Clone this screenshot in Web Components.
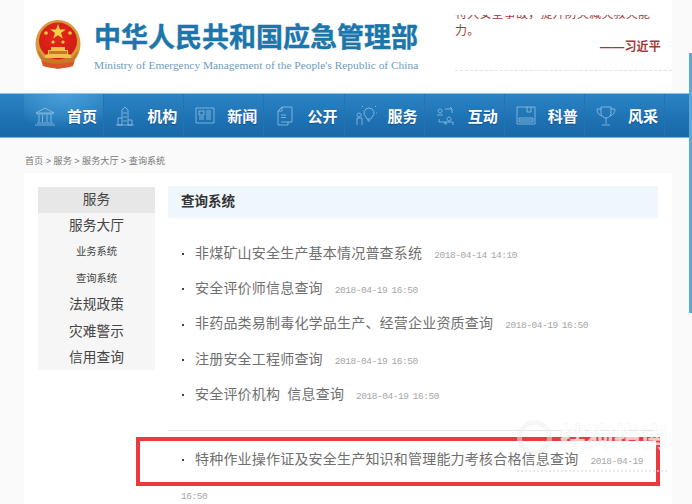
<!DOCTYPE html>
<html><head><meta charset="utf-8"><style>
html,body{margin:0;padding:0;background:#fafafa;height:504px;overflow:hidden}
body{font-family:"Liberation Sans","Noto Sans CJK SC",sans-serif;position:relative}
</style></head><body>
<site-header></site-header>
<site-nav>
<nav-item label="首页" icon="bank" active></nav-item>
<nav-item label="机构" icon="tower"></nav-item>
<nav-item label="新闻" icon="news"></nav-item>
<nav-item label="公开" icon="docs"></nav-item>
<nav-item label="服务" icon="idea"></nav-item>
<nav-item label="互动" icon="talk"></nav-item>
<nav-item label="科普" icon="disk"></nav-item>
<nav-item label="风采" icon="cup"></nav-item>
</site-nav>
<bread-crumb>首页 &gt; 服务 &gt; 服务大厅 &gt; 查询系统</bread-crumb>
<main-panel>
<side-menu slot="side">
<menu-item kind="head">服务</menu-item>
<menu-item>服务大厅</menu-item>
<menu-item kind="sub">业务系统</menu-item>
<menu-item kind="sub">查询系统</menu-item>
<menu-item>法规政策</menu-item>
<menu-item>灾难警示</menu-item>
<menu-item>信用查询</menu-item>
</side-menu>
<result-list slot="main" heading="查询系统">
<result-row date="2018-04-14 14:10">非煤矿山安全生产基本情况普查系统</result-row>
<result-row date="2018-04-19 16:50">安全评价师信息查询</result-row>
<result-row date="2018-04-19 16:50">非药品类易制毒化学品生产、经营企业资质查询</result-row>
<result-row date="2018-04-19 16:50">注册安全工程师查询</result-row>
<result-row date="2018-04-19 16:50">安全评价机构 信息查询</result-row>
<result-row date="2018-04-19 16:50" class="gap">特种作业操作证及安全生产知识和管理能力考核合格信息查询</result-row>
</result-list>
</main-panel>
<call-out></call-out>
<edge-bar></edge-bar>
<script>
const C='"Liberation Sans","Noto Sans CJK SC",sans-serif';
function def(name,html){customElements.define(name,class extends HTMLElement{connectedCallback(){if(this.shadowRoot)return;const r=this.attachShadow({mode:'open'});r.innerHTML=typeof html==='function'?html(this):html;}});}
def('site-header',`<style>
:host{display:flex;width:648px;height:90px;margin-left:24px;background:#fff;box-sizing:border-box;padding:20px 0 0 11px;font-family:${C}}
.e{width:46px;height:50px;flex:none}
.t{margin-left:13px;width:351px;flex:none}
.cn{font-size:27px;line-height:36px;height:36px;font-weight:700;color:#1b76ac;white-space:nowrap;-webkit-text-stroke:.4px #1b76ac}
.en{font:11.400px/14px "Liberation Serif",serif;color:#6d9cc0;white-space:nowrap;margin-top:2px}
.q{flex:none;width:217px;margin-left:10px;margin-top:-5px;height:55px;border-bottom:1px dashed #e2e2e2;overflow:hidden;font-size:12px;color:#a33a3a}
.q div{line-height:17px;letter-spacing:.2px;white-space:nowrap}
.q .a{margin-top:-9px}.q .s{text-align:right;padding-right:11px;font-weight:700;margin-top:-1px}
</style>
<svg class="e" viewBox="0 0 46 50"><defs><radialGradient id="g" cx=".45" cy=".35" r=".8"><stop offset="0" stop-color="#e8261c"/><stop offset="1" stop-color="#c81a12"/></radialGradient></defs>
<ellipse cx="23" cy="24" rx="22.500" ry="24" fill="#d69a3a"/><path d="M3 30c1 10 9 18 20 19 11-1 19-9 20-19l-6 8H9z" fill="#c9772a"/>
<ellipse cx="23" cy="21" rx="19" ry="18.500" fill="url(#g)"/>
<path d="M23 4l1.900 5.600h5.900l-4.800 3.400 1.800 5.600-4.800-3.400-4.800 3.400 1.800-5.600-4.800-3.400h5.900z" fill="#f7d343"/>
<g fill="#f7d343"><circle cx="11" cy="13" r="1.800"/><circle cx="35" cy="13" r="1.800"/><circle cx="18" cy="22" r="1.600"/><circle cx="28" cy="22" r="1.600"/></g>
<path d="M10 38h26v-3l-3-1v-4h-3v-3H16v3h-3v4l-3 1z" fill="#f0c24a"/><path d="M14 31h18v3H14z" fill="#c9772a"/>
<path d="M6 40c6 5 28 5 34 0l-2 6c-8 3-22 3-30 0z" fill="#d8542a"/></svg>
<div class="t"><div class="cn">中华人民共和国应急管理部</div><div class="en">Ministry of Emergency Management of the People's Republic of China</div></div>
<div class="q"><div class="a">特大安全事故，提升防灾减灾救灾能</div><div>力。</div><div class="s">——习近平</div></div>`);
def('site-nav',`<style>
:host{display:flex;height:45px;margin-top:3px;box-sizing:border-box;padding-left:24px;border-top:1px solid #8fc3e6;border-bottom:1px solid #7fb6dc;background:linear-gradient(#2b83c3,#1c6fb0 70%,#1a69a8);font-family:${C};overflow:hidden}
</style><slot></slot>`);
const icons={
bank:'<path d="M11 3 2 8h18zM3 9h16M3 18h16M1 20h20M5 10v7M8.500 10v7M13 10v7M17 10v7"/>',
tower:'<path d="M8 20V5l3-3 3 3v15M10 7v2M12 7v2M10 11v2M12 11v2M10 15v2M12 15v2M8 20H4v-7h4M14 20h4v-5h-4M2 20h18"/>',
news:'<path d="M2 3h18v15H2zM5 6h5v4H5zM12 6h5M12 8h5M12 10h5M5 12h5M5 14h5M12 12h5M12 14h5"/>',
docs:'<path d="M8 2h10v15H7M8 2 4 6v14h10v-3M4 6h4V2M7 10h5M7 12.500h5"/>',
idea:'<path d="M14 3a5 5 0 0 1 3 9l-1 2h-4l-1-2a5 5 0 0 1 3-9zM13 14v2h2M4 8a2 2 0 1 0 .1 0M2 20v-7h5v7M20 2l1-1M8 2 7 1M21 8h1"/>',
talk:'<path d="M5 4a2 2 0 1 0 .1 0M2 10h6M10 4h7l-2-2M17 4v4M4 14v3h7l-2 2M14 12a2 2 0 1 0 .1 0M11 20v-3h7v3"/>',
disk:'<path d="M2 2h18v17H2zM4 13h14v4H4zM12 2v5h4V2M5 15h12"/>',
cup:'<path d="M6 2h10v6a5 5 0 0 1-10 0zM6 4H2c0 4 2 6 5 7M16 4h4c0 4-2 6-5 7M11 13v6M7 20h8"/>'};
def('nav-item',h=>`<style>
:host{display:flex;flex:none;align-items:center;width:80.150px;box-sizing:border-box;height:100%;padding-left:10px;box-shadow:inset -1px 0 0 #2472b0;${h.hasAttribute('active')?'background:radial-gradient(ellipse 60px 36px at 50% 0,#4a9fd8,transparent);':''}}
svg{width:22px;height:22px;fill:none;stroke:#a9d1ee;stroke-width:.75;flex:none;opacity:.9}
span{margin-left:11px;font-size:15px;font-weight:700;color:#fff;white-space:nowrap;text-shadow:0 1px 1px rgba(0,0,60,.3)}
</style><svg viewBox="0 0 22 22">${icons[h.getAttribute('icon')]}</svg><span>${h.getAttribute('label')}</span>`);
def('bread-crumb',`<style>:host{display:block;margin:17px 0 0 25px;height:18px;font:9.100px/12px ${C};color:#777;white-space:nowrap}</style><slot></slot>`);
def('main-panel',`<style>
:host{display:flex;width:648px;height:340px;margin-left:24px;background:#fff;box-sizing:border-box;padding:14px 0 0 14px;gap:13px;font-family:${C}}
</style><slot name="side"></slot><slot name="main"></slot>`);
def('side-menu',`<style>:host{display:block;width:117px;height:183px;flex:none;background:#f6f6f6}</style><slot></slot>`);
def('menu-item',h=>{const k=h.getAttribute('kind');return `<style>:host{display:block;text-align:center;color:#444;height:26.500px;line-height:26px;font-size:${k==='sub'?'10.300px':'13.700px'};${k==='head'?'background:#e7e7e7;height:25.500px;line-height:25px':''}}</style><slot></slot>`});
def('result-list',h=>`<style>
:host{display:block;width:490px;flex:none;margin-top:-1px}
h2{margin:0;height:32px;background:#eff6fc;font-size:13.500px;line-height:32px;padding-left:13px;color:#333;font-weight:700}
.b{padding:17.500px 0 0 13px}
</style><h2>${h.getAttribute('heading')}</h2><div class="b"><slot></slot></div>`);
def('result-row',h=>{const d=h.getAttribute('date').split(' ');const g=h.classList.contains('gap');return `<style>
:host{display:block;width:476px;font-size:14px;line-height:35.400px;color:#6f6f6f;letter-spacing:.2px;word-spacing:3px;${g?'margin-top:17px;margin-left:-13px;padding:11.500px 0 0 13px;border-top:1px solid #e6e6e6;line-height:35px;':''}}
i{display:inline-block;width:2px;height:2px;background:#444;margin:0 11px 0 1px;vertical-align:middle}
time{font-family:"Liberation Mono",monospace;font-size:9.500px;line-height:1;letter-spacing:-.45px;color:#a6a6a6}
.f{margin-left:12px}.s{font-size:14px;word-spacing:0}
</style><i></i><slot></slot><time class="f">${d[0]}</time><span class="s"> </span><time>${d[1]}</time>`});
def('call-out',`<style>
:host{display:block;position:absolute;left:136px;top:437px;width:524px;height:49px;box-sizing:border-box;border:4px solid #ea3a3d;font-family:${C};pointer-events:none}
.w{position:absolute;left:377px;top:-21px;display:flex;align-items:center;gap:8px;color:rgba(255,255,255,.72);font-size:27px;line-height:32px;white-space:nowrap;font-weight:700;-webkit-text-stroke:.5px rgba(215,215,215,.3)}
.c{width:35px;height:35px;border:5px solid rgba(238,238,238,.5);border-radius:50%;box-sizing:border-box;flex:none}
.d{position:absolute;left:377px;top:29px;width:150px;border-top:2px dotted rgba(225,225,225,.7)}
</style><div class="w"><div class="c"></div>搜狗指南</div><div class="d"></div>`);
def('edge-bar',`<style>:host{display:block;position:absolute;left:689px;top:53px;width:3px;height:260px;background:#5aa8dc}</style>`);
</script>
</body></html>
